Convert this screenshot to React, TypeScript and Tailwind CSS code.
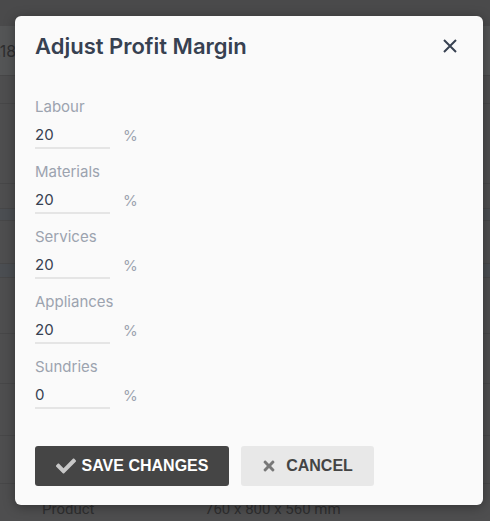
import React, { useState } from 'react';
import { FaCheck, FaTimes } from 'react-icons/fa';

type Margins = {
  labour: string;
  materials: string;
  services: string;
  appliances: string;
  sundries: string;
};

const fields: { key: keyof Margins; label: string }[] = [
  { key: 'labour', label: 'Labour' },
  { key: 'materials', label: 'Materials' },
  { key: 'services', label: 'Services' },
  { key: 'appliances', label: 'Appliances' },
  { key: 'sundries', label: 'Sundries' }
];

const App: React.FC = () => {
  const [form, setForm] = useState<Margins>({
    labour: '20',
    materials: '20',
    services: '20',
    appliances: '20',
    sundries: '0'
  });

  const handleChange = (e: React.ChangeEvent<HTMLInputElement>) => {
    setForm({ ...form, [e.target.name]: e.target.value });
  };

  return (
    <div className="relative h-[521px] w-full overflow-hidden bg-[#4e4e4f] font-['Inter',sans-serif]">
      {/* page behind the dimmed overlay */}
      <div className="h-[26px] bg-[#4a4a4b]" />
      <div className="flex h-[49px] items-center bg-[#545556] text-[16px] text-[#2e2e2f]">
        <span className="-ml-[10px]">1.18</span>
      </div>
      <div className="h-[28px] border-t border-[#474748]" />
      <div className="h-[80px] border-t border-[#474748]" />
      <div className="h-[25px] border-t border-[#474748]" />
      <div className="h-[12px] border-t border-[#474748] bg-[#4b4e52]" />
      <div className="h-[43px] border-t border-[#474748]" />
      <div className="h-[14px] border-t border-[#474748] bg-[#4b4e52]" />
      <div className="h-[56px] border-t border-[#474748]" />
      <div className="h-[50px] border-t border-[#474748]" />
      <div className="h-[52px] border-t border-[#474748]" />
      <div className="h-[48px] border-t border-[#474748]" />
      <div className="flex h-[38px] items-start border-t border-[#474748] pt-[14px] font-['Roboto',sans-serif] text-[15px] text-[#2f2f30]">
        <span className="ml-[42px] w-[163px]">Product</span>
        <span>760 x 800 x 560 mm</span>
      </div>

      {/* modal */}
      <div className="absolute left-[15px] top-[16px] flex h-[489px] w-[468px] flex-col rounded-md bg-[#fafafa] shadow-[0_2px_12px_rgba(0,0,0,0.35)]">
        <div className="flex items-center justify-between pl-5 pr-[26px] pt-[16px]">
          <h2 className="text-[22px] font-semibold leading-7 text-[#374151]">Adjust Profit Margin</h2>
          <button type="button" className="text-[#374151]">
            <svg width="14" height="14" viewBox="0 0 14 14" fill="none">
              <path d="M1 1L13 13M13 1L1 13" stroke="currentColor" strokeWidth="2" />
            </svg>
          </button>
        </div>

        <form className="mt-[37px] flex flex-col px-5">
          {fields.map((f, i) => (
            <div key={f.key} className={i < fields.length - 1 ? 'mb-[13px]' : ''}>
              <label className="block text-[15px] leading-5 text-[#9ca3af]">{f.label}</label>
              <div className="flex items-end">
                <input
                  name={f.key}
                  value={form[f.key]}
                  onChange={handleChange}
                  className="h-[32px] w-[75px] border-b-2 border-[#e5e5e5] bg-transparent pt-[4px] text-[15px] text-[#374151] outline-none"
                />
                <span className="mb-[3px] ml-[13px] text-[15px] leading-5 text-[#9ca3af]">%</span>
              </div>
            </div>
          ))}

          <div className="mt-[37px] flex gap-[12px] font-['Liberation_Sans',Arial,sans-serif]">
            <button
              type="button"
              className="flex h-[40px] w-[194px] items-center justify-center gap-[6px] rounded-[3px] bg-[#454545] text-[16px] font-bold text-white"
            >
              <FaCheck className="h-[20px] w-[20px] text-[#c8c8c8]" />
              SAVE CHANGES
            </button>
            <button
              type="button"
              className="flex h-[40px] w-[133px] items-center justify-center gap-[10px] rounded-[3px] bg-[#e8e8e8] text-[16px] font-bold text-[#444444]"
            >
              <FaTimes className="h-[16px] w-[14px] text-[#777777]" />
              CANCEL
            </button>
          </div>
        </form>
      </div>
    </div>
  );
};

export default App;
